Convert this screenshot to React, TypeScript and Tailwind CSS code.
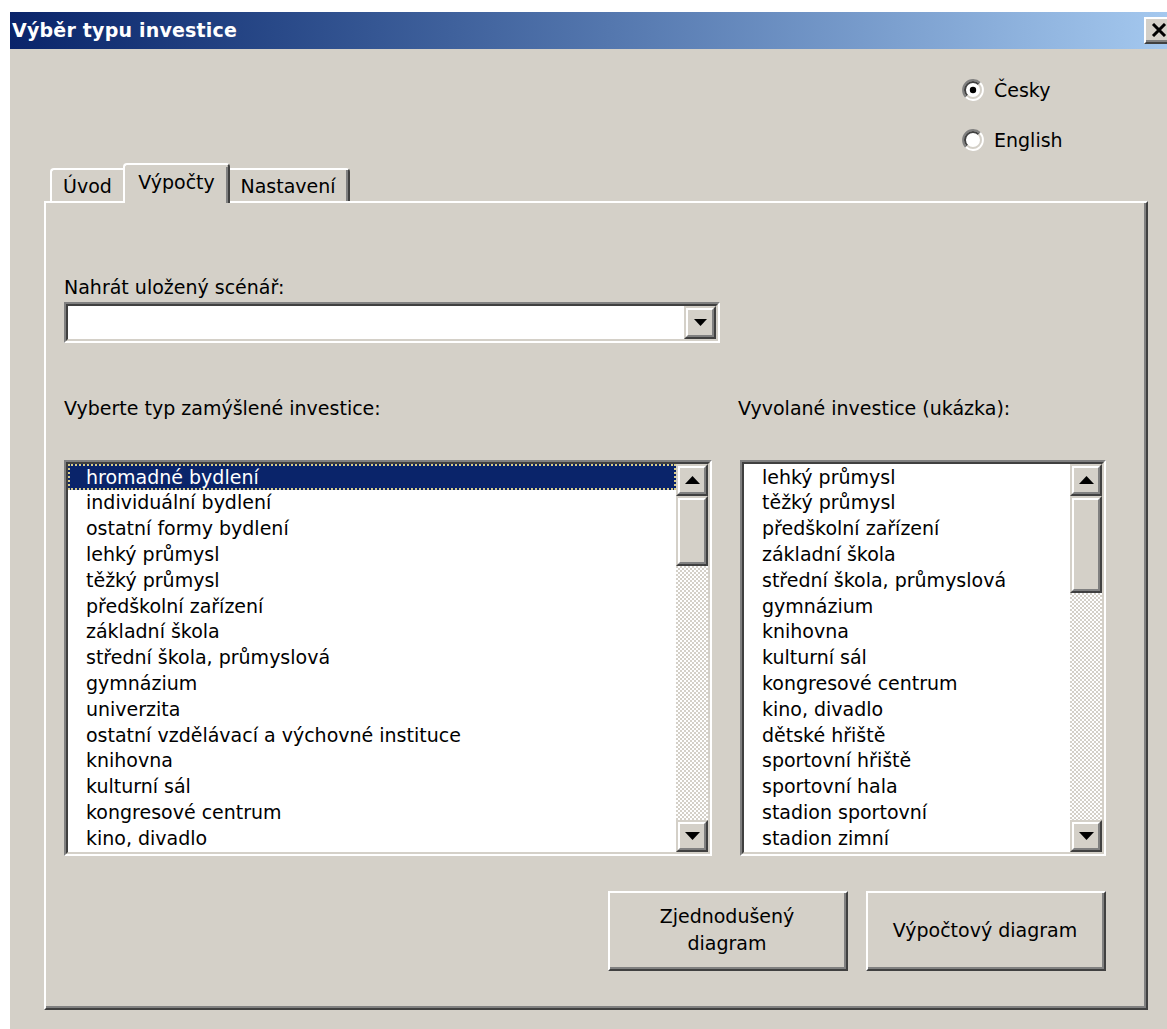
import React from "react";

const LEFT_ITEMS = [
  "hromadné bydlení",
  "individuální bydlení",
  "ostatní formy bydlení",
  "lehký průmysl",
  "těžký průmysl",
  "předškolní zařízení",
  "základní škola",
  "střední škola, průmyslová",
  "gymnázium",
  "univerzita",
  "ostatní vzdělávací a výchovné instituce",
  "knihovna",
  "kulturní sál",
  "kongresové centrum",
  "kino, divadlo",
];

const RIGHT_ITEMS = [
  "lehký průmysl",
  "těžký průmysl",
  "předškolní zařízení",
  "základní škola",
  "střední škola, průmyslová",
  "gymnázium",
  "knihovna",
  "kulturní sál",
  "kongresové centrum",
  "kino, divadlo",
  "dětské hřiště",
  "sportovní hřiště",
  "sportovní hala",
  "stadion sportovní",
  "stadion zimní",
];

function Triangle({ down, w = 15, h = 8 }: { down?: boolean; w?: number; h?: number }) {
  return (
    <svg width={w} height={h} viewBox={`0 0 ${w} ${h}`}>
      {down ? (
        <polygon points={`0,0 ${w},0 ${w / 2},${h}`} fill="#000" />
      ) : (
        <polygon points={`0,${h} ${w},${h} ${w / 2},0`} fill="#000" />
      )}
    </svg>
  );
}

/* classic raised 3D frame used by scroll buttons and the thumb */
function Raised3D({ className = "", children }: { className?: string; children?: React.ReactNode }) {
  return (
    <div className={`border-2 border-t-[#d4d0c8] border-l-[#d4d0c8] border-r-[#404040] border-b-[#404040] bg-[#d4d0c8] ${className}`}>
      <div className="w-full h-full border-2 border-t-white border-l-white border-r-[#808080] border-b-[#808080] flex items-center justify-center">
        {children}
      </div>
    </div>
  );
}

/* classic sunken 3D frame used by list boxes and the combo box */
function Sunken({ className = "", children }: { className?: string; children?: React.ReactNode }) {
  return (
    <div className={`border-2 border-t-[#808080] border-l-[#808080] border-r-white border-b-white ${className}`}>
      <div className="w-full h-full border-2 border-t-[#404040] border-l-[#404040] border-r-[#d4d0c8] border-b-[#d4d0c8] flex">
        {children}
      </div>
    </div>
  );
}

function ScrollBar({ thumb }: { thumb: number }) {
  return (
    <div className="w-[32px] h-full flex flex-col shrink-0">
      <Raised3D className="h-[32px] shrink-0">
        <Triangle />
      </Raised3D>
      <Raised3D className="shrink-0">
        <div style={{ height: thumb - 8 }} />
      </Raised3D>
      <div className="flex-1 bg-[image:repeating-conic-gradient(#ffffff_0%_25%,#d4d0c8_0%_50%)] bg-[length:4px_4px]" />
      <Raised3D className="h-[32px] shrink-0">
        <Triangle down />
      </Raised3D>
    </div>
  );
}

function ListBox({
  items,
  selected,
  width,
  thumb,
}: {
  items: string[];
  selected?: number;
  width: string;
  thumb: number;
}) {
  return (
    <Sunken className={`${width} h-[396px]`}>
      <div className="flex-1 bg-white overflow-hidden">
        {items.map((it, i) =>
          i === selected ? (
            <div
              key={it}
              className="h-[25.8px] flex items-center pl-[18px] bg-[#0a246a] text-white outline-2 outline-dotted outline-[#d8cc8a] -outline-offset-2 whitespace-nowrap"
            >
              {it}
            </div>
          ) : (
            <div key={it} className="h-[25.8px] flex items-center pl-[18px] text-black whitespace-nowrap">
              {it}
            </div>
          )
        )}
      </div>
      <ScrollBar thumb={thumb} />
    </Sunken>
  );
}

function Radio({ checked, label }: { checked?: boolean; label: string }) {
  return (
    <div className="h-[26px] flex items-center gap-[10px]">
      <svg width="22" height="22" viewBox="0 0 22 22">
        <circle cx="11" cy="11" r="9" fill="#fff" />
        <path d="M3.93 18.07 A10 10 0 0 1 18.07 3.93" stroke="#808080" strokeWidth="2" fill="none" />
        <path d="M18.07 3.93 A10 10 0 0 1 3.93 18.07" stroke="#ffffff" strokeWidth="2" fill="none" />
        <path d="M5.34 16.66 A8 8 0 0 1 16.66 5.34" stroke="#404040" strokeWidth="2" fill="none" />
        <path d="M16.66 5.34 A8 8 0 0 1 5.34 16.66" stroke="#d4d0c8" strokeWidth="2" fill="none" />
        {checked && <circle cx="11" cy="11" r="3.2" fill="#000" />}
      </svg>
      <span>{label}</span>
    </div>
  );
}

function PushButton({ children, className = "" }: { children: React.ReactNode; className?: string }) {
  return (
    <div className={`border-2 border-t-white border-l-white border-r-[#404040] border-b-[#404040] bg-[#d4d0c8] ${className}`}>
      <div className="w-full h-full border-r-2 border-b-2 border-[#808080] flex items-center justify-center text-center leading-[27px]">
        {children}
      </div>
    </div>
  );
}

export default function App() {
  return (
    <div className="w-[1167px] h-[1029px] bg-white overflow-hidden font-['DejaVu_Sans','Noto_Sans',sans-serif] text-[19px] text-black">
      <div className="ml-[10px] mt-[12px] w-[1170px] h-[1030px] bg-[#d4d0c8] flex flex-col">
        {/* title bar */}
        <div className="h-[37px] shrink-0 flex items-center pl-[2px] pr-[4px] bg-gradient-to-r from-[#0a246a] to-[#a6caf0]">
          <span className="text-white font-bold text-[19px] tracking-[0.2px]">Výběr typu investice</span>
          <div className="ml-auto w-[32px] h-[27px] border-2 border-t-white border-l-white border-r-[#404040] border-b-[#404040] bg-[#d4d0c8]">
            <div className="w-full h-full border-r-2 border-b-2 border-[#808080] flex items-center justify-center">
              <svg width="16" height="14" viewBox="0 0 16 14">
                <path d="M2 1 L14 13 M14 1 L2 13" stroke="#000" strokeWidth="3" />
              </svg>
            </div>
          </div>
        </div>

        {/* body */}
        <div className="flex-1 pl-[34px] flex flex-col">
          <div className="pt-[28px] pl-[918px] flex flex-col gap-[24px]">
            <Radio checked label="Česky" />
            <Radio label="English" />
          </div>

          {/* tab strip */}
          <div className="mt-[10px] h-[38px] flex items-end pl-[6px]">
            <div className="w-[73px] h-[33px] border-t-2 border-l-2 border-white rounded-tl-[4px] flex items-center justify-center pt-[2px]">
              Úvod
            </div>
            <div className="relative z-10 -mb-[2px] w-[107px] h-[40px] bg-[#d4d0c8] border-t-2 border-l-2 border-r-2 border-white border-r-[#404040] rounded-t-[4px] flex justify-center pt-[3px]">
              <span className="border-r-2 border-[#808080] absolute right-0 top-[2px] bottom-0" />
              Výpočty
            </div>
            <div className="w-[120px] h-[33px] border-t-2 border-r-2 border-white border-r-[#404040] rounded-tr-[4px]">
              <div className="w-full h-full border-r-2 border-[#808080] flex items-center justify-center pt-[2px]">
                Nastavení
              </div>
            </div>
          </div>

          {/* tab page */}
          <div className="w-[1104px] h-[809px] border-2 border-t-white border-l-white border-r-[#404040] border-b-[#404040]">
            <div className="w-full h-full border-r-2 border-b-2 border-[#808080] pl-[18px] pt-[71px] flex flex-col">
              <div className="h-[26px] flex items-center">Nahrát uložený scénář:</div>
              <Sunken className="mt-[2px] w-[656px] h-[41px]">
                <div className="flex-1 bg-white" />
                <Raised3D className="w-[32px] h-full">
                  <Triangle down w={13} h={7} />
                </Raised3D>
              </Sunken>

              <div className="mt-[52px] flex gap-[28px]">
                <div className="w-[648px] flex flex-col">
                  <div className="h-[26px] flex items-center">Vyberte typ zamýšlené investice:</div>
                  <div className="mt-[39px]">
                    <ListBox items={LEFT_ITEMS} selected={0} width="w-[648px]" thumb={70} />
                  </div>
                </div>
                <div className="w-[366px] flex flex-col">
                  <div className="h-[26px] flex items-center -ml-[2px]">Vyvolané investice (ukázka):</div>
                  <div className="mt-[39px]">
                    <ListBox items={RIGHT_ITEMS} width="w-[366px]" thumb={97} />
                  </div>
                </div>
              </div>

              <div className="mt-[35px] w-[1042px] flex justify-end gap-[18px]">
                <PushButton className="w-[240px] h-[80px]">
                  Zjednodušený
                  <br />
                  diagram
                </PushButton>
                <PushButton className="w-[240px] h-[80px]">Výpočtový diagram</PushButton>
              </div>
            </div>
          </div>
        </div>
      </div>
    </div>
  );
}
